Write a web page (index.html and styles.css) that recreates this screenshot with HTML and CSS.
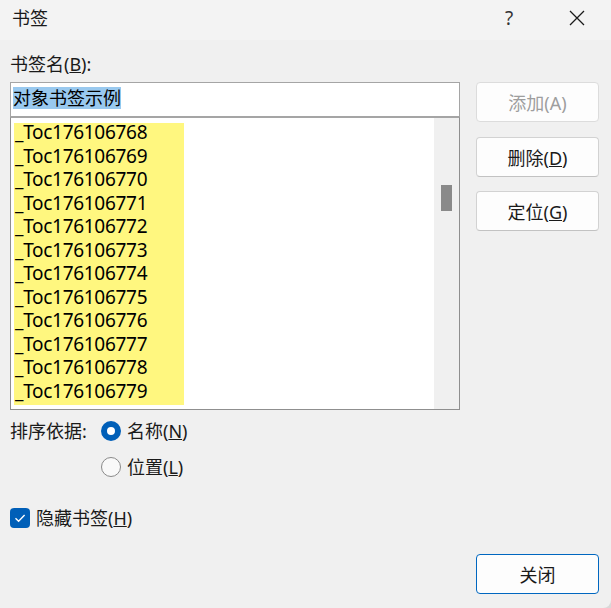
FILE: index.html
```html
<!DOCTYPE html>
<html lang="zh-CN">
<head>
    <meta charset="UTF-8">
    <meta name="viewport" content="width=device-width, initial-scale=1.0">
    <title>书签</title>
    <link rel="stylesheet" href="styles.css">
</head>
<body>
    <div class="dialog">
        <div class="titlebar">
            <span class="title">书签</span>
            <span class="help">?</span>
            <span class="close-x">
                <svg width="16" height="16" viewBox="0 0 16 16">
                    <path d="M1 1 L15 15 M15 1 L1 15" stroke="#1a1a1a" stroke-width="1.3" fill="none"/>
                </svg>
            </span>
        </div>
        <div class="content">
            <div class="top">
                <div class="left">
                    <div class="label">书签名(<u>B</u>):</div>
                    <div class="name-box"><span class="sel">对象书签示例</span></div>
                    <div class="list">
                        <div class="items">
                            <div class="item">_Toc176106768</div>
                            <div class="item">_Toc176106769</div>
                            <div class="item">_Toc176106770</div>
                            <div class="item">_Toc176106771</div>
                            <div class="item">_Toc176106772</div>
                            <div class="item">_Toc176106773</div>
                            <div class="item">_Toc176106774</div>
                            <div class="item">_Toc176106775</div>
                            <div class="item">_Toc176106776</div>
                            <div class="item">_Toc176106777</div>
                            <div class="item">_Toc176106778</div>
                            <div class="item">_Toc176106779</div>
                        </div>
                        <div class="vscroll"><div class="thumb"></div></div>
                    </div>
                </div>
                <div class="buttons">
                    <button class="btn disabled">添加(A)</button>
                    <button class="btn">删除(<u>D</u>)</button>
                    <button class="btn">定位(<u>G</u>)</button>
                </div>
            </div>
            <div class="sort">
                <div class="sort-label">排序依据:</div>
                <div class="sort-options">
                    <div class="opt"><span class="radio checked"></span><span>名称(<u>N</u>)</span></div>
                    <div class="opt"><span class="radio"></span><span>位置(<u>L</u>)</span></div>
                </div>
            </div>
            <div class="hidden-row">
                <span class="check">
                    <svg width="20" height="20" viewBox="0 0 20 20">
                        <path d="M5.5 10.2 L8.6 13.2 L14.6 7" stroke="#fff" stroke-width="1.4" fill="none"/>
                    </svg>
                </span>
                <span>隐藏书签(<u>H</u>)</span>
            </div>
            <div class="footer">
                <button class="btn primary">关闭</button>
            </div>
        </div>
    </div>
</body>
</html>
```

FILE: styles.css
```css
body {
    margin: 0;
    font-family: "Noto Sans", "Noto Sans CJK SC", sans-serif;
    font-size: 18px;
    color: #1a1a1a;
    background: #d8d8d8;
}
.dialog {
    width: 611px;
    height: 608px;
    background: #f0f0f0;
    border-bottom-right-radius: 8px;
    overflow: hidden;
}
.titlebar {
    height: 40px;
    display: flex;
    align-items: center;
    padding: 0 0 4px 12px;
    box-sizing: border-box;
    background: #f3f3f3;
}
.title {
    flex: 1;
    line-height: 24px;
}
.help {
    width: 20px;
    text-align: center;
    margin-right: 50px;
    font-size: 19px;
    color: #333;
}
.close-x {
    width: 16px;
    height: 16px;
    margin-right: 26px;
    display: flex;
}
.content {
    padding: 12px 12px 0 10px;
}
.top {
    display: flex;
}
.left {
    width: 451px;
}
.label {
    line-height: 24px;
    margin-bottom: 6px;
}
.name-box {
    height: 35px;
    box-sizing: border-box;
    border: 1px solid #a5a5a5;
    background: #fff;
    padding: 3px 0 0 2px;
}
.sel {
    display: inline-block;
    line-height: 22px;
    background: #99c9ef;
    color: #000;
}
.list {
    height: 293px;
    box-sizing: border-box;
    border: 1px solid #8f8f8f;
    border-top-color: #a5a5a5;
    background: #fff;
    display: flex;
    overflow: hidden;
}
.items {
    flex: 1;
    padding: 5px 0 0 3px;
}
.item {
    width: 169px;
    height: 23.5px;
    line-height: 19.5px;
    padding-left: 1px;
    font-size: 19px;
    background: #fff77f;
    color: #000;
    letter-spacing: -0.3px;
}
.vscroll {
    width: 25px;
    background: #f0f0f0;
}
.thumb {
    width: 11px;
    height: 26px;
    margin: 67px 0 0 7px;
    background: #8a8a8a;
}
.buttons {
    margin-left: 16px;
    padding-top: 30px;
    display: flex;
    flex-direction: column;
    gap: 14.5px;
}
.btn {
    width: 123px;
    height: 40px;
    font-family: inherit;
    font-size: 18px;
    color: #1a1a1a;
    background: #fdfdfd;
    border: 1px solid #d2d2d2;
    border-bottom-color: #c2c2c2;
    border-radius: 4px;
    padding: 0;
}
.btn.disabled {
    color: #9e9e9e;
    border-color: #dcdcdc;
}
.btn.primary {
    border-color: #0067c0;
}
.sort {
    display: flex;
    margin-top: 7px;
}
.sort-label {
    width: 91px;
    line-height: 28px;
}
.sort-options {
    display: flex;
    flex-direction: column;
    gap: 8px;
}
.opt {
    display: flex;
    align-items: center;
    gap: 6px;
    line-height: 28px;
}
.radio {
    width: 20px;
    height: 20px;
    box-sizing: border-box;
    border-radius: 50%;
    border: 1px solid #8a8a8a;
    background: #f9f9f9;
}
.radio.checked {
    border: 6px solid #005fb8;
    background: #fff;
}
.hidden-row {
    display: flex;
    align-items: center;
    gap: 6px;
    line-height: 28px;
    margin-top: 23px;
}
.check {
    width: 20px;
    height: 20px;
    border-radius: 4px;
    background: #005fb8;
    display: flex;
}
.footer {
    display: flex;
    justify-content: flex-end;
    margin-top: 22px;
}
```
